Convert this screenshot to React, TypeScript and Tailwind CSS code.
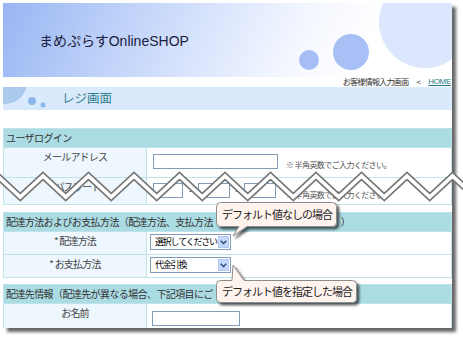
import type { ReactNode } from "react";

function Section({ title, children }: { title: ReactNode; children: ReactNode }) {
  return (
    <div className="border border-[#bfe3e9] bg-white">
      <div className="h-[18px] bg-[#acdce3] flex items-center pl-[2px] text-[10px] tracking-[-0.6px] leading-none text-[#333] whitespace-nowrap">
        {title}
      </div>
      {children}
    </div>
  );
}

function Label({ text }: { text: string }) {
  return (
    <div className="w-[143px] shrink-0 bg-[#eef7fe] border-r border-[#bfe3e9] pt-[3px] text-center text-[10px] leading-[12px] tracking-[-0.8px] text-[#444]">
      {text}
    </div>
  );
}

function Box({ className }: { className: string }) {
  return <div className={"shrink-0 border border-[#7f9db9] bg-white " + className} />;
}

function Select({ value }: { value: string }) {
  return (
    <div className="w-[81px] h-[16px] border border-[#7f9db9] bg-white flex items-center">
      <span className="flex-1 pl-[4px] text-[9px] tracking-[-1.2px] leading-[12px] text-black whitespace-nowrap">
        {value}
      </span>
      <span className="w-[11px] h-[12px] mr-px bg-[#c6d8fb] border border-[#b2c7f2] flex items-center justify-center">
        <svg width="7" height="5" viewBox="0 0 7 5">
          <path d="M0.7 0.7 L3.5 3.6 L6.3 0.7" stroke="#3f5685" strokeWidth="1.6" fill="none" />
        </svg>
      </span>
    </div>
  );
}

const note = "※ 半角英数でご入力ください。";

export default function App() {
  const zig = Array.from({ length: 24 }, (_, i) => {
    const x = -25.25 + i * 22.75;
    const y = i % 2 === 0 ? 197 : 176;
    return `${x},${y}`;
  }).join(" ");

  return (
    <div className="relative w-[463px] h-[337px] bg-white overflow-hidden pl-[3px] pt-[3px] font-['Noto_Sans_CJK_JP','Noto_Sans',sans-serif] text-[#333]">
      <div className="w-[449px] h-[325px] bg-white overflow-hidden flex flex-col shadow-[4px_4px_3px_rgba(0,0,0,0.6)]">
        {/* header */}
        <div className="relative h-[74px] shrink-0 flex items-center pl-[36px] pt-[2px] bg-[linear-gradient(115deg,#98b6f3_0%,#d6e2fc_42%,#f4f7ff_65%,#ffffff_80%)]">
          <svg className="absolute inset-0" width="449" height="74">
            <circle cx="422" cy="19" r="46" fill="#dce7fd" />
            <circle cx="348" cy="49" r="18" fill="#a9c0f6" />
            <circle cx="306" cy="57" r="10" fill="#a6bef5" />
          </svg>
          <h1 className="relative text-[14px] leading-none text-[#1c1c3c] font-['Liberation_Sans','Noto_Sans_CJK_JP',sans-serif]">
            まめぷらすOnlineSHOP
          </h1>
        </div>

        {/* breadcrumb */}
        <div className="h-[10px] shrink-0 flex items-center justify-end gap-[8px] pr-px text-[8px] leading-none tracking-[-0.7px] text-[#333]">
          <span>お客様情報入力画面</span>
          <span>&lt;</span>
          <span className="underline text-[#2a7a86] font-['Liberation_Sans',sans-serif] tracking-[-0.3px]">HOME</span>
        </div>

        {/* band */}
        <div className="relative h-[23px] shrink-0 bg-[#d8eafc] flex items-center pl-[59px] overflow-hidden">
          <svg className="absolute left-0 top-0" width="60" height="23">
            <circle cx="2" cy="-5" r="22" fill="#aacbee" />
            <circle cx="29" cy="14" r="4" fill="#8cb7ea" />
            <circle cx="40" cy="18" r="2.5" fill="#8cb7ea" />
          </svg>
          <span className="relative text-[12.5px] leading-none text-[#2f7d8a]">レジ画面</span>
        </div>

        <div className="h-[18px] shrink-0" />

        <Section title="ユーザログイン">
          <div className="flex h-[30px] border-t border-[#bfe3e9]">
            <Label text="メールアドレス" />
            <div className="flex items-start pl-[6px] pt-[6px]">
              <Box className="w-[125px] h-[15px]" />
              <span className="ml-[8px] mt-[6px] text-[8px] leading-[10px] tracking-[-0.6px] text-[#555] whitespace-nowrap">{note}</span>
            </div>
          </div>
          <div className="flex h-[27px] border-t border-[#bfe3e9]">
            <Label text="* パスワード" />
            <div className="flex items-start pl-[6px] pt-[5px]">
              <Box className="w-[30px] h-[15px]" />
              <span className="w-[15px] text-center text-[10px] leading-[14px]">-</span>
              <Box className="w-[32px] h-[15px]" />
              <span className="w-[14px] text-center text-[10px] leading-[14px]">-</span>
              <Box className="w-[32px] h-[15px]" />
              <span className="ml-[10px] mt-[7px] text-[8px] leading-[10px] tracking-[-0.6px] text-[#555] whitespace-nowrap">{note}</span>
            </div>
          </div>
        </Section>

        <div className="h-[7px] shrink-0" />

        <Section
          title={
            <>
              <span>配達方法およびお支払方法（配達方法、支払方法</span>
              <span className="ml-[128px]">）</span>
            </>
          }
        >
          <div className="flex h-[23px] border-t border-[#bfe3e9]">
            <Label text="* 配達方法" />
            <div className="pl-[3px] pt-[2px]">
              <Select value="選択してください" />
            </div>
          </div>
          <div className="flex h-[23px] border-t border-[#bfe3e9]">
            <Label text="* お支払方法" />
            <div className="pl-[3px] pt-[2px]">
              <Select value="代金引換" />
            </div>
          </div>
        </Section>

        <div className="h-[6px] shrink-0" />

        <Section title="配達先情報（配達先が異なる場合、下記項目にご">
          <div className="flex h-[40px] border-t border-[#bfe3e9]">
            <Label text="お名前" />
            <div className="pl-[5px] pt-[7px]">
              <Box className="w-[88px] h-[15px]" />
            </div>
          </div>
        </Section>
      </div>

      {/* overlays: tear line and callouts */}
      <svg className="absolute inset-0 pointer-events-none" width="463" height="337">
        <defs>
          <filter id="sh" x="-10%" y="-20%" width="130%" height="160%">
            <feDropShadow dx="2.5" dy="2.5" stdDeviation="0.9" floodColor="#000" floodOpacity="0.6" />
          </filter>
        </defs>
        <polyline points={zig} fill="none" stroke="#777" strokeWidth="7" strokeLinejoin="miter" />
        <polyline points={zig} fill="none" stroke="#fff" strokeWidth="3.6" strokeLinejoin="miter" />
        <path
          d="M220.5,202.5 H332.5 Q336.5,202.5 336.5,206.5 V222.5 Q336.5,226.5 332.5,226.5 H247 L233,236 L239,226.5 H220.5 Q216.5,226.5 216.5,222.5 V206.5 Q216.5,202.5 220.5,202.5 Z"
          fill="#fff3ee"
          stroke="#8c8c8c"
          filter="url(#sh)"
        />
        <path
          d="M220.5,280.5 H232 L233,265 L244,280.5 H352.5 Q356.5,280.5 356.5,284.5 V298.5 Q356.5,302.5 352.5,302.5 H220.5 Q216.5,302.5 216.5,298.5 V284.5 Q216.5,280.5 220.5,280.5 Z"
          fill="#fff3ee"
          stroke="#8c8c8c"
          filter="url(#sh)"
        />
      </svg>
      <span className="absolute left-[222px] top-[209px] text-[11px] leading-none tracking-[-1px] text-[#222] whitespace-nowrap">
        デフォルト値なしの場合
      </span>
      <span className="absolute left-[222px] top-[286px] text-[11px] leading-none tracking-[-1px] text-[#222] whitespace-nowrap">
        デフォルト値を指定した場合
      </span>
    </div>
  );
}
